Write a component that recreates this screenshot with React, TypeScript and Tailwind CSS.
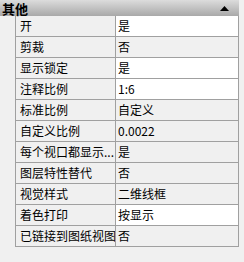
import React from 'react';

const rows: { label: string; value: string; white?: boolean }[] = [
  { label: '开', value: '是', white: true },
  { label: '剪裁', value: '否' },
  { label: '显示锁定', value: '是', white: true },
  { label: '注释比例', value: '1:6', white: true },
  { label: '标准比例', value: '自定义' },
  { label: '自定义比例', value: '0.0022' },
  { label: '每个视口都显示...', value: '是' },
  { label: '图层特性替代', value: '否' },
  { label: '视觉样式', value: '二维线框' },
  { label: '着色打印', value: '按显示', white: true },
  { label: '已链接到图纸视图', value: '否' },
];

const App = () => {
  return (
    <div
      className="w-[244px] h-[262px] bg-[#f0f0f0] text-[12px] text-black overflow-hidden"
      style={{ fontFamily: '"Microsoft YaHei", "Noto Sans CJK SC", sans-serif' }}
    >
      {/* section header */}
      <div className="w-[239px] h-4 bg-gradient-to-b from-[#dcdcdc] to-[#a9a9a9] flex items-center justify-between pl-[2px] pr-[10px]">
        <span className="font-bold text-[13px] leading-none">其他</span>
        <svg width="9" height="5" viewBox="0 0 9 5">
          <polygon points="0,5 9,5 4.5,0" fill="#000" />
        </svg>
      </div>

      <div className="flex">
        <div className="w-[15px]" />
        <div className="w-[224px] border-l border-[#a0a0a0]">
          {rows.map((r, i) => (
            <div key={i} className="flex h-[21px] border-b border-[#a0a0a0]">
              <div className="w-[100px] border-r border-[#a0a0a0] pl-[4px] flex items-center whitespace-nowrap overflow-hidden">
                {r.label}
              </div>
              <div
                className={`flex-1 border-r border-[#a0a0a0] pl-[2px] flex items-center whitespace-nowrap ${
                  r.white ? 'bg-white' : 'bg-[#f0f0f0]'
                }`}
              >
                {r.value}
              </div>
            </div>
          ))}
        </div>
      </div>
    </div>
  );
};

export default App;
